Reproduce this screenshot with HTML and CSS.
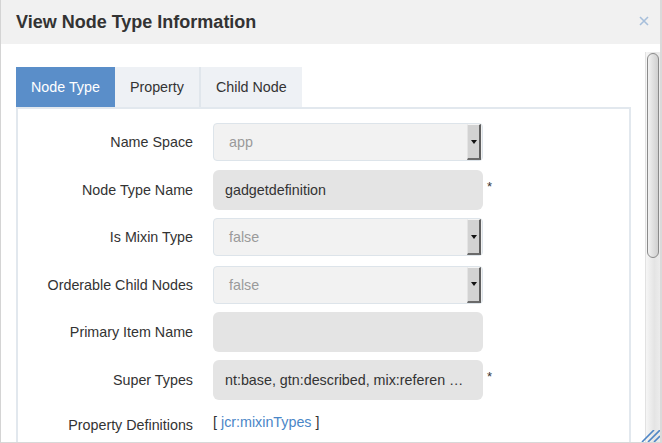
FILE: index.html
```html
<!DOCTYPE html>
<html>
<head>
<meta charset="utf-8">
<link rel="stylesheet" href="styles.css">
</head>
<body>
<div class="dialog">
  <div class="header">
    <h1 class="title">View Node Type Information</h1>
    <span class="close"><svg width="10" height="10" viewBox="0 0 10 10"><path d="M1 1 L9 9 M9 1 L1 9" stroke="#a7bfdb" stroke-width="1.6" fill="none"/></svg></span>
  </div>
  <div class="body">
    <div class="main">
      <div class="tabs">
        <div class="tab active">Node Type</div>
        <div class="tab">Property</div>
        <div class="tab sep">Child Node</div>
      </div>
      <div class="pane">
        <div class="row">
          <div class="label">Name Space</div>
          <div class="select"><span class="val">app</span><span class="btn"><span class="arrow"></span></span></div>
        </div>
        <div class="row">
          <div class="label">Node Type Name</div>
          <div class="input">gadgetdefinition</div>
          <span class="req">*</span>
        </div>
        <div class="row">
          <div class="label">Is Mixin Type</div>
          <div class="select"><span class="val">false</span><span class="btn"><span class="arrow"></span></span></div>
        </div>
        <div class="row">
          <div class="label">Orderable Child Nodes</div>
          <div class="select"><span class="val">false</span><span class="btn"><span class="arrow"></span></span></div>
        </div>
        <div class="row">
          <div class="label">Primary Item Name</div>
          <div class="input"></div>
        </div>
        <div class="row">
          <div class="label">Super Types</div>
          <div class="input">nt:base, gtn:described, mix:referen …</div>
          <span class="req">*</span>
        </div>
        <div class="row top">
          <div class="label padded">Property Definitions</div>
          <div class="value">[ <a class="link">jcr:mixinTypes</a> ]</div>
        </div>
      </div>
    </div>
    <div class="scrollbar"><div class="thumb"></div></div>
  </div>
  <svg class="grip" width="20" height="12" viewBox="0 0 20 12">
    <path d="M2 12 L14 0 M8 12 L20 0 M14 12 L20 6" stroke="#4f86c6" stroke-width="1.6" fill="none"/>
  </svg>
</div>
</body>
</html>
```

FILE: styles.css
```css
* { box-sizing: border-box; }
html, body { margin: 0; padding: 0; }
body {
  font-family: "Liberation Sans", Arial, sans-serif;
  font-size: 14.3px;
  color: #333;
  background: #fff;
}
.dialog {
  position: relative;
  width: 662px;
  height: 443px;
  overflow: hidden;
  border-left: 1px solid #d4d4d4;
  border-right: 2px solid #dadada;
  border-bottom: 1px solid #d8d8d8;
  background: #fff;
}
.header {
  height: 44px;
  background: #f1f1f1;
  display: flex;
  align-items: center;
  justify-content: space-between;
  padding: 0 11px 0 15px;
}
.title {
  margin: 0;
  font-size: 18px;
  font-weight: bold;
  color: #333;
}
.close { display: flex; margin-top: -3px; }
.body {
  display: flex;
  height: 399px;
  padding-top: 8px;
}
.main {
  flex: 1;
  padding: 15px 14px 0 15px;
}
.tabs {
  display: flex;
  height: 40px;
}
.tab {
  padding: 0 15px;
  line-height: 40px;
  background: #eef1f5;
  color: #333;
}
.tab.active { background: #5a8ec9; color: #fff; }
.tab.sep { border-left: 2px solid #e0e6ec; }
.pane {
  border: 2px solid #e2e8ee;
  border-bottom: none;
  padding-top: 13px;
  height: 400px;
  display: flex;
  flex-direction: column;
  gap: 7.6px;
}
.row {
  display: flex;
  align-items: center;
  height: 40px;
}
.row.top { align-items: flex-start; }
.label {
  width: 175px;
  text-align: right;
  margin-right: 20px;
  line-height: 20px;
}
.label.padded { padding-top: 7px; }
.select {
  width: 270px;
  height: 38px;
  display: flex;
  background: #f2f2f2;
  border: 1px solid #dde4ea;
  border-radius: 4px;
}
.val {
  flex: 1;
  padding-left: 15px;
  display: flex;
  align-items: center;
  color: #9a9a9a;
}
.btn {
  width: 14px;
  margin-right: 1px;
  background: #d2d2d2;
  border-top: 1px solid #f4f4f4;
  border-left: 1px solid #e4e4e4;
  border-right: 2px solid #5e5e5e;
  border-bottom: 2px solid #6a6a6a;
  display: flex;
  align-items: center;
  justify-content: center;
}
.arrow {
  width: 0;
  height: 0;
  border-left: 3px solid transparent;
  border-right: 3px solid transparent;
  border-top: 4px solid #111;
  margin-left: 1px;
}
.input {
  width: 270px;
  height: 40px;
  background: #e4e4e4;
  border-radius: 6px;
  padding-left: 12px;
  display: flex;
  align-items: center;
  color: #333;
  white-space: nowrap;
  overflow: hidden;
}
.req {
  margin-left: 4px;
  align-self: flex-start;
  margin-top: 9px;
  font-size: 13px;
}
.value {
  padding-top: 4px;
  line-height: 20px;
}
.link { color: #4a86c7; text-decoration: none; }
.scrollbar {
  width: 15px;
  border-left: 1px solid #e2e2e2;
  background: linear-gradient(to right, #f6f6f6, #e4e4e4 60%, #ececec);
  padding: 1px 1px 0 1px;
}
.thumb {
  height: 205px;
  border: 1px solid #8a8a8a;
  border-radius: 6px;
  background: linear-gradient(to right, #f2f2f2, #e0e0e0 50%, #d0d0d0);
}
.grip {
  position: absolute;
  right: 0;
  bottom: 0;
}
```
